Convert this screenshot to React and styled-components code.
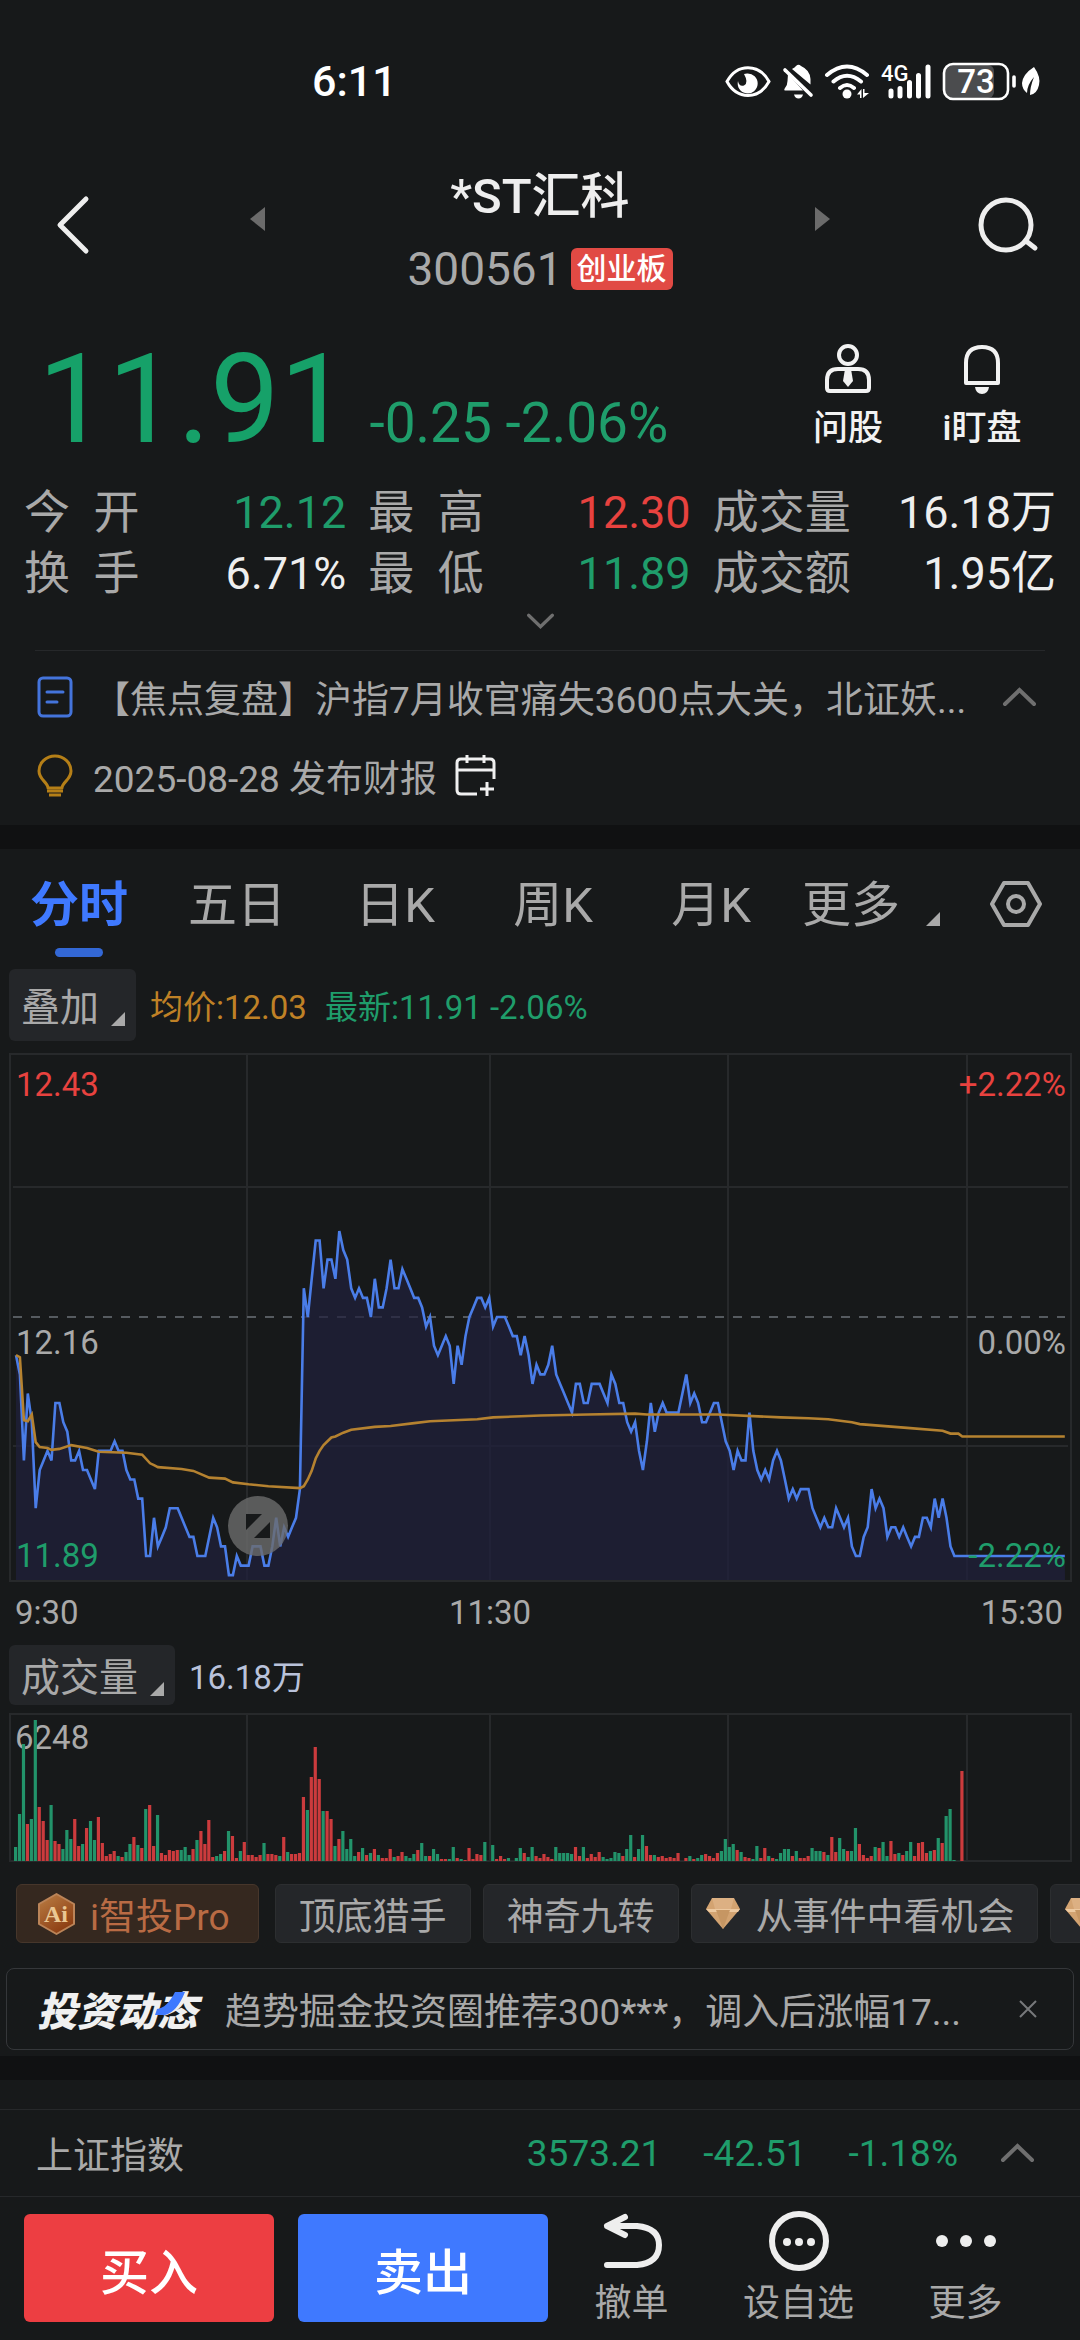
import { useState } from "react";
import styled, { createGlobalStyle } from "styled-components";

const GlobalStyle = createGlobalStyle`
  * {
    box-sizing: border-box;
  }
  body {
    margin: 0;
    background-color: #17191a;
    color: #a9a9a9;
    font-family: Roboto, "Noto Sans CJK SC", sans-serif;
    font-size: 37px;
  }
  button {
    margin: 0;
    padding: 0;
    border: none;
    background: none;
    color: inherit;
    font: inherit;
    cursor: pointer;
  }
  svg {
    display: block;
    flex-shrink: 0;
  }
`;

const GREEN = "#1f9d6b";
const RED = "#e8423f";
const BLUE = "#3f79ff";
const ORANGE = "#bf8126";

const colors = {
  up: RED,
  down: GREEN,
  plain: "#eeeeee",
};

const Page = styled.main`
  min-height: 100vh;
  overflow: hidden;
`;

/* status bar */

const StatusBar = styled.div`
  height: 162px;
  padding: 0 36px 0 312px;
  display: flex;
  align-items: center;
  justify-content: space-between;
  color: #fff;
`;

const Clock = styled.time`
  font-size: 43px;
  font-weight: 500;
`;

/* header */

const Header = styled.header`
  height: 144px;
  display: grid;
  grid-template-columns: 1fr 54% 1fr;
  align-items: center;
`;

const HeaderButton = styled.button`
  justify-self: ${({ $end }) => ($end ? "end" : "start")};
  padding: ${({ $end }) => ($end ? "0 40px 18px 20px" : "0 20px 18px 54px")};
`;

const StockNav = styled.div`
  display: flex;
  align-items: center;
  justify-content: space-between;
`;

const NavArrow = styled.button`
  padding: 0 2px 30px;
`;

const StockTitle = styled.div`
  text-align: center;
`;

const StockName = styled.h1`
  margin: 0;
  font-size: 49px;
  line-height: 70px;
  font-weight: 500;
  color: #eee;
`;

const StockCode = styled.div`
  display: flex;
  align-items: center;
  justify-content: center;
  gap: 8px;
  height: 74px;
  font-size: 46px;
`;

const Board = styled.span`
  padding: 0 6px;
  border-radius: 6px;
  background-color: #e14a44;
  color: #fff;
  font-size: 30px;
  line-height: 42px;
  font-weight: 500;
`;

/* quote */

const Quote = styled.section`
  height: 176px;
  padding: 12px 54px 0 38px;
  display: flex;
  align-items: center;
  justify-content: space-between;
`;

const PriceLine = styled.div`
  display: flex;
  align-items: baseline;
  gap: 20px;
  color: ${GREEN};
`;

const Price = styled.strong`
  font-size: 124px;
  line-height: 164px;
  font-weight: 400;
  color: #16a169;
`;

const Change = styled.span`
  font-size: 55px;
`;

const QuoteActions = styled.div`
  display: flex;
  gap: 46px;
`;

const QuoteAction = styled.button`
  min-width: 88px;
  display: flex;
  flex-direction: column;
  align-items: center;
  gap: 8px;
  color: #f2f2f2;
  font-size: 35px;
  line-height: 54px;
  font-weight: 500;
`;

const Stats = styled.dl`
  margin: 0;
  padding: 0 24px;
  display: grid;
  grid-template-columns: 322fr 322fr 343fr;
  column-gap: 22px;
  font-size: 46px;
  line-height: 61px;
`;

const Stat = styled.div`
  display: flex;
  justify-content: space-between;
  white-space: nowrap;
`;

const StatLabel = styled.dt``;

const StatValue = styled.dd`
  margin: 0;
  font-size: 45px;
  color: ${({ $tone }) => colors[$tone]};
`;

const ExpandButton = styled.button`
  width: 100%;
  height: 46px;
  padding-bottom: 12px;
  display: flex;
  align-items: center;
  justify-content: center;
`;

/* news */

const News = styled.section`
  margin: 0 35px;
  padding-bottom: 16px;
  border-top: 1px solid #26282a;
`;

const NewsRow = styled.div`
  height: ${({ $tall }) => ($tall ? "92px" : "66px")};
  padding-right: 8px;
  display: flex;
  align-items: center;
  gap: 18px;
`;

const NewsLink = styled.a`
  flex: 1;
  min-width: 0;
  overflow: hidden;
  white-space: nowrap;
  text-overflow: ellipsis;
  color: inherit;
  text-decoration: none;
`;

const Strip = styled.div`
  height: 24px;
  background-color: #101112;
`;

/* chart tabs */

const Tabs = styled.nav`
  height: 110px;
  display: grid;
  grid-template-columns: repeat(5, 158fr) 162fr 128fr;
  justify-items: center;
  align-items: center;
`;

const Corner = styled.i`
  width: 14px;
  height: 14px;
  background-color: #a9a9a9;
  clip-path: polygon(100% 0, 100% 100%, 0 100%);
`;

const Tab = styled.button`
  position: relative;
  height: 110px;
  padding-bottom: 8px;
  display: flex;
  align-items: center;
  gap: 26px;
  font-size: 49px;
  font-weight: ${({ $active }) => ($active ? 700 : 400)};
  color: ${({ $active }) => ($active ? BLUE : "inherit")};

  ${Corner} {
    margin-top: 38px;
  }

  &::after {
    content: "";
    display: ${({ $active }) => ($active ? "block" : "none")};
    position: absolute;
    left: 50%;
    bottom: 2px;
    width: 48px;
    height: 9px;
    margin-left: -24px;
    border-radius: 5px;
    background-color: #3368d6;
  }
`;

const ChartHead = styled.div`
  padding-left: 9px;
  display: flex;
  align-items: center;
  gap: 14px;
  font-size: 33px;
`;

const PickButton = styled.button`
  height: ${({ $tall }) => ($tall ? "72px" : "60px")};
  padding: 0 11px 2px 12px;
  display: flex;
  align-items: center;
  gap: 12px;
  border-radius: 6px;
  background-color: #242629;
  font-size: 39px;

  ${Corner} {
    margin-top: 30px;
  }
`;

const Legend = styled.span`
  margin-right: 4px;
  color: ${({ $color }) => $color};
`;

const ChartPanel = styled.section`
  padding-top: 10px;
`;

const ChartBox = styled.div`
  position: relative;
  margin: ${({ $top }) => $top}px 8px 0 9px;
`;

const ChartSvg = styled.svg`
  width: 100%;
  height: auto;
`;

const ZoomButton = styled.button`
  position: absolute;
  left: 219px;
  bottom: 26px;
`;

const TimeAxis = styled.div`
  height: 63px;
  padding: 0 17px 3px 15px;
  display: grid;
  grid-template-columns: 1fr 1fr 1fr;
  align-items: center;
  font-size: 33px;
`;

const AxisLabel = styled.time`
  text-align: ${({ $align }) => $align};
  ${({ $align }) => $align === "center" && "padding-right: 98px;"}
`;

/* feature chips */

const Chips = styled.div`
  margin-top: 22px;
  padding-left: 16px;
  display: flex;
  gap: 12px;
  overflow: hidden;
`;

const Chip = styled.button`
  flex-shrink: 0;
  height: 59px;
  padding: 0 ${({ $icon }) => ($icon ? "22px 0 14px" : "23px")};
  display: flex;
  align-items: center;
  gap: 16px;
  border: 1px solid #2c2e30;
  border-radius: 6px;
  background-color: #242629;
  white-space: nowrap;
`;

const ProChip = styled(Chip)`
  margin-right: 4px;
  padding: 0 28px 0 20px;
  gap: 14px;
  border-color: #46362b;
  background-color: #35281f;
  color: #b96b44;
`;

/* promo banner */

const Banner = styled.aside`
  height: 82px;
  margin: 25px 6px 6px;
  padding: 0 34px 0 30px;
  display: flex;
  align-items: center;
  gap: 28px;
  border: 1px solid #35373a;
  border-radius: 8px;
`;

const BannerLogo = styled.strong`
  position: relative;
  color: #f0f0f0;
  font-size: 40px;
  font-weight: 900;
  font-style: italic;
  white-space: nowrap;

  svg {
    position: absolute;
    right: 12px;
    top: 12px;
  }
`;

/* index row and trade bar */

const IndexRow = styled.section`
  height: 88px;
  margin-top: 29px;
  padding: 0 45px 0 36px;
  display: flex;
  align-items: center;
  gap: 42px;
  border-top: 1px solid #26282a;
  border-bottom: 1px solid #26282a;
  color: ${GREEN};
`;

const IndexName = styled.span`
  margin-right: auto;
  color: #a9a9a9;
`;

const TradeBar = styled.footer`
  padding: 17px 31px 18px 24px;
  display: grid;
  grid-template-columns: 250fr 24fr 250fr 167fr 167fr 167fr;
`;

const TradeButton = styled.button`
  height: 108px;
  grid-column: ${({ $sell }) => ($sell ? 3 : 1)};
  border-radius: 6px;
  background-color: ${({ $sell }) => ($sell ? BLUE : "#ed3e42")};
  color: #fff;
  font-size: 49px;
  font-weight: 500;
`;

const BarAction = styled.button`
  height: 108px;
  display: flex;
  flex-direction: column;
  align-items: center;
  justify-content: space-between;
  line-height: 37px;

  svg {
    margin-top: -3px;
  }
`;

const PREV_CLOSE = 12.16;

// minute closes, in hundredths above or below the previous close
const ticks = [
  -4, -6, -15, -8, -11, -20, -16, -15, -14, -15, -9, -9, -11, -12, -15, -15,
  -14, -16, -16, -17, -18, -14, -14, -14, -14, -13, -14, -14, -16, -17, -17,
  -19, -19, -25, -25, -21, -24, -23, -22, -20, -20, -20, -21, -22, -23, -23,
  -25, -25, -25, -23, -21, -22, -24, -24, -27, -27, -25, -26, -26, -26, -24,
  -24, -24, -26, -26, -24, -21, -24, -22, -23, -22, -21, -18, 3, 0, 4, 8, 8, 3,
  6, 6, 4, 9, 7, 6, 3, 2, 3, 2, 2, 0, 4, 1, 1, 3, 6, 3, 3, 5, 4, 3, 2, 2, 1,
  -1, 0, -3, -4, -3, -2, -3, -7, -3, -5, -2, 0, 1, 2, 2, 1, 2, -1, 0, 0, 0, -1,
  -2, -2, -4, -2, -4, -7, -5, -6, -6, -5, -3, -6, -7, -8, -9, -10, -7, -7, -9,
  -9, -7, -7, -7, -8, -9, -6, -7, -9, -9, -11, -12, -11, -14, -16, -13, -9,
  -12, -10, -9, -10, -10, -10, -10, -8, -6, -9, -8, -9, -11, -11, -10, -9, -9,
  -11, -13, -14, -16, -14, -15, -15, -10, -14, -16, -17, -16, -17, -15, -14,
  -15, -17, -19, -18, -19, -18, -18, -18, -20, -21, -22, -21, -22, -22, -20,
  -21, -22, -21, -24, -25, -25, -23, -22, -18, -20, -19, -20, -23, -22, -22,
  -23, -22, -23, -24, -23, -23, -21, -21, -22, -19, -21, -19, -21, -24, -25,
  -25, -25,
];

// [minute, hundredths from the previous close]
const average = [
  [0, -4], [1, -4.2], [2, -10.8], [3, -10.9], [4, -10.2], [5, -13.1],
  [6, -13.6], [8, -13.7], [9, -13.9], [11, -13.8], [14, -13.4], [18, -13.7],
  [21, -14.1], [28, -14.2], [32, -14.4], [34, -15.3], [35, -15.5], [36, -15.7],
  [42, -15.9], [45, -16.1], [49, -16.8], [53, -16.9], [55, -17.3], [59, -17.5],
  [64, -17.7], [72, -17.9], [73, -17.7], [74, -17], [75, -16.1], [76, -14.8],
  [77, -14], [78, -13.4], [79, -13], [80, -12.6], [81, -12.5], [83, -12.1],
  [85, -11.8], [91, -11.5], [95, -11.4], [101, -11.1], [105, -10.9],
  [117, -10.7], [121, -10.5], [133, -10.3], [145, -10.2], [157, -10.1],
  [160, -10.2], [178, -10.2], [194, -10.5], [201, -10.6], [206, -10.7],
  [212, -11], [214, -11.2], [226, -11.6], [235, -11.9], [237, -12.2],
  [239, -12.2], [240, -12.5], [266, -12.5],
];

// one bar a minute: r for a rise, g for a fall, then its height
const volumes = `g14 g47 g117 r37 g42 g141 r54 r40 r21 g56 r20 r17 g12 g31 g22
r42 r15 g17 r33 g40 g21 r44 r18 r5 r7 r10 g5 r4 g9 g17 r24 g16 r13 g52 r56 r15
g46 r8 r6 r11 r10 r11 g11 g14 g6 r12 g21 r30 r17 r41 r4 g5 g7 r10 g30 r25 r3
g10 r19 r6 r6 r4 r6 g18 r7 r7 r6 g5 r24 g9 r7 r7 r8 r64 g51 r84 r114 r82 g50
r50 r42 g15 r22 g30 g12 g22 g5 r9 g13 r6 g8 r12 g6 r3 r3 r12 g4 r5 r9 g5 g3 g7
r11 g18 g5 r5 g12 g7 r2 r2 g2 g14 r3 g2 r1 r13 r2 r7 r6 g19 g0 g16 r2 r5 r2 g3
g0 g3 g13 r8 g4 g14 r5 r3 r7 r4 r2 g14 g8 g8 g8 g7 r14 r5 g14 r3 r7 r4 r9 g4 g2
g3 g9 g8 r5 g12 g26 r4 g12 g26 r15 r6 g6 r4 r5 r3 r4 r3 r8 g0 r3 g5 r2 g3 g6 r7
r5 r3 r8 g10 g22 g14 g17 r11 g9 r4 r3 g2 g15 r3 r13 g5 r3 g2 g8 g12 g12 r5 g10
r3 r3 r5 g13 g10 g10 r9 g6 r24 r9 g23 g12 r10 g10 g33 r17 r6 r3 r5 g14 r13 g19
g5 r20 r7 g8 r6 g10 g19 r5 r18 r19 r8 g10 r11 g23 r18 g45 g52 g1 g0 r90`
  .split(/\s+/)
  .map((v) => ({ up: v[0] === "r", size: Number(v.slice(1)) }));

const stats = [
  { label: "今\u2002开", value: "12.12", tone: "down" },
  { label: "最\u2002高", value: "12.30", tone: "up" },
  { label: "成交量", value: "16.18万", tone: "plain" },
  { label: "换\u2002手", value: "6.71%", tone: "plain" },
  { label: "最\u2002低", value: "11.89", tone: "down" },
  { label: "成交额", value: "1.95亿", tone: "plain" },
];

const tabs = ["分时", "五日", "日K", "周K", "月K", "更多"];

const minuteX = (minute) => 7 + minute * 3.943;
const tickY = (tick) => 264 - tick * 9.56;
const toPoints = (list) =>
  list.map(([m, t]) => `${minuteX(m).toFixed(1)},${tickY(t).toFixed(1)}`).join(" ");

const GridColumns = ({ height }) =>
  [238, 481, 719, 958].map((x) => (
    <line key={x} x1={x} x2={x} y1="0" y2={height} stroke="#27292b" strokeWidth="2" />
  ));

const PriceChart = () => {
  const closes = ticks.map((t, i) => [i, t]);
  closes.push([266, ticks[ticks.length - 1]]);
  const line = toPoints(closes);
  return (
    <ChartSvg viewBox="0 0 1063 529" role="img" aria-label="分时走势">
      <rect x="1" y="1" width="1061" height="527" fill="none" stroke="#27292b" strokeWidth="2" />
      <GridColumns height={529} />
      <path d="M4 134H1059M4 393H1059" stroke="#27292b" strokeWidth="2" />
      <path d="M4 264H1056" stroke="#565b60" strokeWidth="2" strokeDasharray="9 9" />
      <polygon points={`7,527 ${line} 1056,527`} fill="#20203c" fillOpacity="0.72" />
      <polyline points={line} fill="none" stroke="#4a7de8" strokeWidth="2.6" />
      <polyline points={toPoints(average)} fill="none" stroke="#b58230" strokeWidth="2.6" />
      <g fontSize="33" fill="#a9a9a9">
        <text x="7" y="43" fill={RED}>12.43</text>
        <text x="7" y="301">{PREV_CLOSE}</text>
        <text x="7" y="514" fill={GREEN}>11.89</text>
        <g textAnchor="end">
          <text x="1057" y="43" fill={RED}>+2.22%</text>
          <text x="1057" y="301">0.00%</text>
          <text x="1057" y="514" fill={GREEN}>-2.22%</text>
        </g>
      </g>
    </ChartSvg>
  );
};

const VolumeChart = () => (
  <ChartSvg viewBox="0 0 1063 149" role="img" aria-label="成交量">
    <rect x="1" y="1" width="1061" height="147" fill="none" stroke="#27292b" strokeWidth="2" />
    <GridColumns height={149} />
    <text x="6" y="36" fontSize="33" fill="#a9a9a9">6248</text>
    {volumes.map(({ up, size }, i) => (
      <rect
        key={i}
        x={minuteX(i) - 2}
        y={148 - size}
        width="3.2"
        height={size}
        fill={up ? "#cc3b3d" : "#22936a"}
      />
    ))}
  </ChartSvg>
);

const StatusIcons = () => (
  <svg width="322" height="40" viewBox="0 0 322 40" fill="none" stroke="#fff" aria-hidden="true">
    <path d="M5 20.5C15 2 37 2 47 20.5C37 39 15 39 5 20.5Z" strokeWidth="3" />
    <path d="M25 12.5A10 10 0 1 1 16 20Q17 26 22 24.5Q27 22 22 13Z" fill="#fff" stroke="none" />
    <path d="M66 13L81 29.5H63Q61.5 29.5 63 27Q65.5 24 65.5 20ZM70 8Q73 6.5 74 5Q76.5 2.5 79 5Q88 9 88.500 18V23.5ZM72 33.5H81Q80 37.5 76.5 37.5Q73 37.5 72 33.5Z" fill="#fff" stroke="none" />
    <path d="M63 9L89 34" strokeWidth="3.6" strokeLinecap="round" />
    <path d="M105 14Q125 -3 145 14M111.5 20.5Q125 9 139 20.5M118 27Q125 21 132 27" strokeWidth="4" strokeLinecap="round" />
    <circle cx="125" cy="33" r="4.5" fill="#fff" stroke="none" />
    <path d="M135 33.5L139.5 28V37H138V33.5ZM141 28V37L147 32H142.5V28Z" fill="#fff" stroke="none" />
    <text x="159" y="20" fontSize="22" fontWeight="500" fill="#fff" stroke="none">4G</text>
    <path d="M169 30V35M178 27.5V35M187.5 21.5V35M196.5 14.5V35M206 6V35" strokeWidth="5" strokeLinecap="round" />
    <rect x="223" y="4" width="49" height="33" rx="6" fill="#4b4c4e" stroke="none" />
    <rect x="222" y="3" width="64" height="35" rx="9" strokeWidth="2.6" />
    <text x="254" y="32" fontSize="33" fontWeight="500" fill="#fff" stroke="none" textAnchor="middle">73</text>
    <path d="M292 16V25" strokeWidth="3.6" strokeLinecap="round" />
    <path d="M312 6Q319 16 317 24Q315 33 308 34Q308 26 312 16Q305 24 305 32Q300 28 300 22Q301 13 312 6Z" fill="#fff" stroke="none" />
  </svg>
);

const Chevron = ({ up, width = 35, color = "#6f6f6f" }) => (
  <svg width={width} height="20" viewBox="0 0 33 20" fill="none" stroke={color} strokeWidth="4" strokeLinecap="round" aria-hidden="true">
    <path d={up ? "M2 17L16.5 3L31 17" : "M2 3L16.5 17L31 3"} />
  </svg>
);

const Gem = () => (
  <svg width="34" height="32" viewBox="0 0 34 32" aria-hidden="true">
    <path d="M6 0H28L34 11L17 31L0 11Z" fill="#d3a371" />
    <path d="M6 0H28L25 11H9Z" fill="#dcb083" />
    <path d="M0 11H34L32 14H3Z" fill="#edc9a0" />
    <path d="M10 12H24L17 31Z" fill="#c69663" />
  </svg>
);

const AiBadge = () => (
  <svg width="39" height="44" viewBox="0 0 39 44" aria-hidden="true">
    <defs>
      <linearGradient id="ai" x1="0" y1="0" x2="0.6" y2="1">
        <stop offset="0" stopColor="#bb7f45" />
        <stop offset="1" stopColor="#8c3d12" />
      </linearGradient>
    </defs>
    <path d="M19.5 2L37 12V32L19.5 42L2 32V12Z" fill="url(#ai)" stroke="#bb8458" strokeWidth="2" strokeLinejoin="round" />
    <text x="19" y="30" fontSize="24" fontWeight="700" fontFamily="'Liberation Serif', serif" fill="#eac793" textAnchor="middle">Ai</text>
  </svg>
);

const App = () => {
  const [activeTab, setActiveTab] = useState("分时");

  return (
    <Page>
      <GlobalStyle />
      <StatusBar>
        <Clock>6:11</Clock>
        <StatusIcons />
      </StatusBar>

      <Header>
        <HeaderButton aria-label="返回">
          <svg width="38" height="60" viewBox="0 0 38 60" fill="none" stroke="#eee" strokeWidth="5" strokeLinecap="round" strokeLinejoin="round">
            <path d="M32 4L6 30L32 56" />
          </svg>
        </HeaderButton>
        <StockNav>
          <NavArrow aria-label="上一只">
            <svg width="15" height="24" viewBox="0 0 15 24">
              <path d="M15 0V24L0 12Z" fill="#6b6b6b" />
            </svg>
          </NavArrow>
          <StockTitle>
            <StockName>*ST汇科</StockName>
            <StockCode>
              300561
              <Board>创业板</Board>
            </StockCode>
          </StockTitle>
          <NavArrow aria-label="下一只">
            <svg width="15" height="24" viewBox="0 0 15 24">
              <path d="M0 0V24L15 12Z" fill="#6b6b6b" />
            </svg>
          </NavArrow>
        </StockNav>
        <HeaderButton $end aria-label="搜索">
          <svg width="64" height="58" viewBox="0 0 64 58" fill="none" stroke="#eee" strokeWidth="5" strokeLinecap="round">
            <circle cx="30" cy="29" r="25" />
            <path d="M50 45L59 52" />
          </svg>
        </HeaderButton>
      </Header>

      <Quote>
        <PriceLine>
          <Price>11.91</Price>
          <Change>-0.25 -2.06%</Change>
        </PriceLine>
        <QuoteActions>
          <QuoteAction>
            <svg width="48" height="50" viewBox="0 0 48 50" fill="none" stroke="#f2f2f2" strokeWidth="4">
              <circle cx="24" cy="11" r="9" />
              <path d="M14 25H34Q45 25 45 36V44Q45 47 42 47H6Q3 47 3 44V36Q3 25 14 25Z" />
              <path d="M21 25H27L29 37L24 43L19 37Z" fill="#f2f2f2" stroke="none" />
            </svg>
            问股
          </QuoteAction>
          <QuoteAction>
            <svg width="40" height="50" viewBox="0 0 40 50" fill="none" stroke="#f2f2f2" strokeWidth="4">
              <path d="M4 39V19Q4 3 20 3Q36 3 36 19V39Z" strokeLinejoin="round" />
              <path d="M13 43H27Q26 50 20 50Q14 50 13 43Z" fill="#f2f2f2" stroke="none" />
            </svg>
            i盯盘
          </QuoteAction>
        </QuoteActions>
      </Quote>

      <Stats>
        {stats.map(({ label, value, tone }) => (
          <Stat key={label}>
            <StatLabel>{label}</StatLabel>
            <StatValue $tone={tone}>{value}</StatValue>
          </Stat>
        ))}
      </Stats>
      <ExpandButton aria-label="展开">
        <Chevron width={27} />
      </ExpandButton>

      <News>
        <NewsRow $tall>
          <svg width="40" height="42" viewBox="0 0 40 42" fill="none" stroke="#4474dc" strokeWidth="3">
            <rect x="4" y="2" width="32" height="38" rx="4" />
            <path d="M12 16H28M12 26H22" strokeLinecap="round" />
          </svg>
          <NewsLink href="#news">【焦点复盘】沪指7月收官痛失3600点大关，北证妖...</NewsLink>
          <button aria-label="收起">
            <Chevron up />
          </button>
        </NewsRow>
        <NewsRow>
          <svg width="40" height="44" viewBox="0 0 40 44" fill="none" stroke="#b57f17" strokeWidth="3">
            <path d="M13 34C13 28 4 26 4 17A16 15 0 0 1 36 17C36 26 27 28 27 34Z" strokeLinejoin="round" />
            <path d="M12 37H28M14 41H26" />
          </svg>
          <span>2025-08-28 发布财报</span>
          <svg width="42" height="42" viewBox="0 0 42 42" fill="none" stroke="#f0f0f0" strokeWidth="3">
            <path d="M39 24V8Q39 4 35 4H6Q2 4 2 8V35Q2 39 6 39H22M2 15H39M12 0V8M29 0V8M32 27V41M25 34H39" />
          </svg>
        </NewsRow>
      </News>
      <Strip />

      <Tabs>
        {tabs.map((tab) => (
          <Tab key={tab} $active={tab === activeTab} onClick={() => setActiveTab(tab)}>
            {tab}
            {tab === "更多" && <Corner />}
          </Tab>
        ))}
        <button aria-label="设置">
          <svg width="54" height="48" viewBox="0 0 54 48" fill="none" stroke="#a9a9a9" strokeWidth="4" strokeLinejoin="round">
            <path d="M15 3H39L51 24L39 45H15L3 24Z" />
            <circle cx="27" cy="24" r="8" />
          </svg>
        </button>
      </Tabs>

      <ChartPanel>
        <ChartHead>
          <PickButton $tall>
            叠加
            <Corner />
          </PickButton>
          <Legend $color={ORANGE}>均价:12.03</Legend>
          <Legend $color={GREEN}>最新:11.91 -2.06%</Legend>
        </ChartHead>
        <ChartBox $top={12}>
          <PriceChart />
          <ZoomButton aria-label="全屏">
            <svg width="60" height="60" viewBox="0 0 60 60">
              <circle cx="30" cy="30" r="30" fill="#6b6b6b" fillOpacity="0.8" />
              <path d="M18 18H34L18 34ZM42 26V42H26Z" fill="#17191a" />
            </svg>
          </ZoomButton>
        </ChartBox>
        <TimeAxis>
          <AxisLabel $align="left">9:30</AxisLabel>
          <AxisLabel $align="center">11:30</AxisLabel>
          <AxisLabel $align="right">15:30</AxisLabel>
        </TimeAxis>

        <ChartHead>
          <PickButton>
            成交量
            <Corner />
          </PickButton>
          <Legend $color="#b9c2da">16.18万</Legend>
        </ChartHead>
        <ChartBox $top={8}>
          <VolumeChart />
        </ChartBox>
      </ChartPanel>

      <Chips>
        <ProChip>
          <AiBadge />
          i智投Pro
        </ProChip>
        <Chip>顶底猎手</Chip>
        <Chip>神奇九转</Chip>
        <Chip $icon>
          <Gem />
          从事件中看机会
        </Chip>
        <Chip $icon aria-label="更多功能">
          <Gem />
        </Chip>
      </Chips>

      <Banner>
        <BannerLogo>
          投资动态
          <svg width="30" height="24" viewBox="0 0 30 24" aria-hidden="true">
            <path d="M20 0H30Q22 20 10 23H0L2 17Q12 16 20 0Z" fill={BLUE} />
          </svg>
        </BannerLogo>
        <NewsLink href="#feed">趋势掘金投资圈推荐300***，调入后涨幅17...</NewsLink>
        <button aria-label="关闭">
          <svg width="22" height="22" viewBox="0 0 22 22" stroke="#77797b" strokeWidth="2">
            <path d="M3 3L19 19M19 3L3 19" />
          </svg>
        </button>
      </Banner>
      <Strip />

      <IndexRow>
        <IndexName>上证指数</IndexName>
        <span>3573.21</span>
        <span>-42.51</span>
        <span>-1.18%</span>
        <button aria-label="展开指数">
          <Chevron up />
        </button>
      </IndexRow>

      <TradeBar>
        <TradeButton>买入</TradeButton>
        <TradeButton $sell>卖出</TradeButton>
        <BarAction>
          <svg width="60" height="60" viewBox="0 0 60 60" fill="none" stroke="#eee" strokeWidth="6" strokeLinecap="round" strokeLinejoin="round">
            <path d="M23 6L5 15L23 24M5 15H35Q57 17 57 34Q57 52 35 54H5" />
          </svg>
          撤单
        </BarAction>
        <BarAction>
          <svg width="60" height="60" viewBox="0 0 60 60" fill="#eee">
            <circle cx="30" cy="30" r="27" fill="none" stroke="#eee" strokeWidth="6" />
            <circle cx="18" cy="31" r="4" />
            <circle cx="30" cy="31" r="4" />
            <circle cx="42" cy="31" r="4" />
          </svg>
          设自选
        </BarAction>
        <BarAction>
          <svg width="60" height="60" viewBox="0 0 60 60" fill="#eee">
            <circle cx="6" cy="30" r="6" />
            <circle cx="30" cy="30" r="6" />
            <circle cx="54" cy="30" r="6" />
          </svg>
          更多
        </BarAction>
      </TradeBar>
    </Page>
  );
};

export default App;
